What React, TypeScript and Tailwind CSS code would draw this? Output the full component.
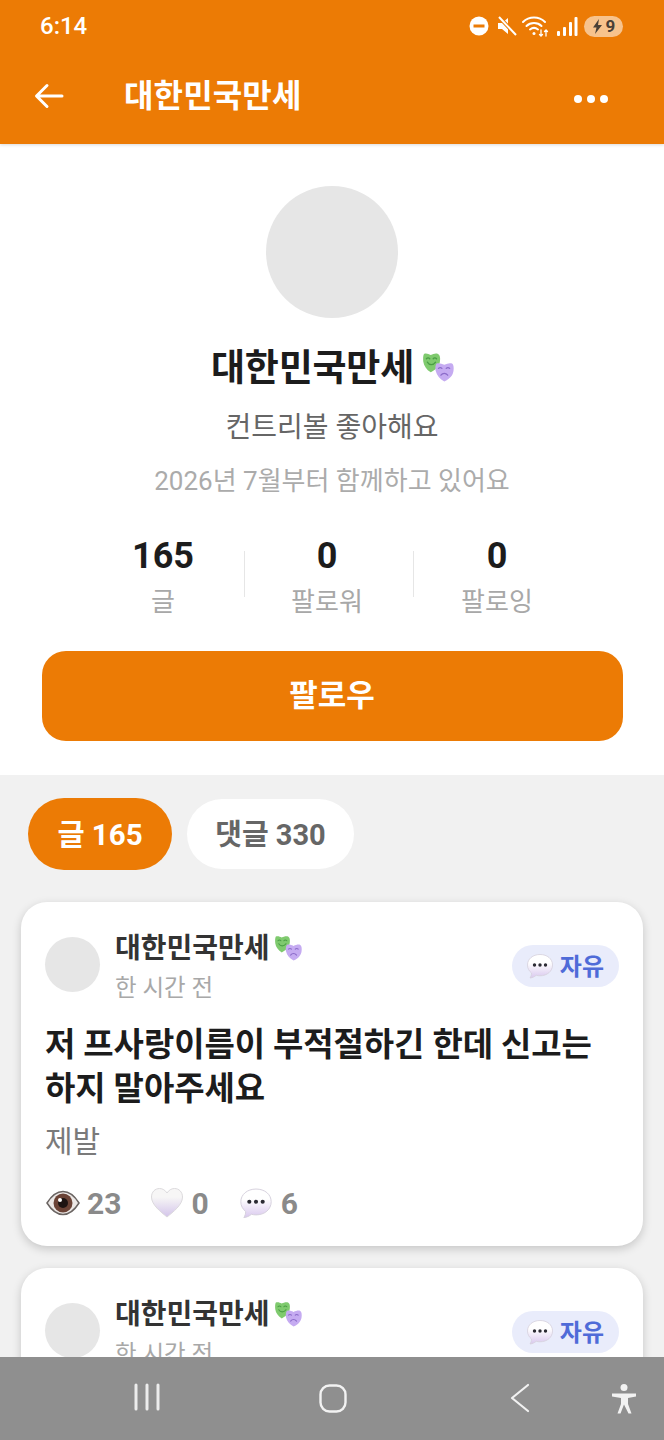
const font = { fontFamily: 'Roboto, "Noto Sans CJK KR", sans-serif' };

const Masks = ({ size = 32 }: { size?: number }) => (
  <svg width={size} height={size} viewBox="0 0 32 32">
    <path d="M1 3c2.500-1 4.500 0 7 1.200C10.500 3 13 2 15.500 3c2 1 2.500 4 2 7.500-.5 4-3 8-9.500 11.500C3.500 19 1 15.500.3 11 0 8 0 4.500 1 3z" fill="#7fca6e" />
    <path d="M3.500 8c1-1.300 2.500-1.300 3.500 0M10.500 8c1-1.300 2.500-1.300 3.500 0M4.500 11.500c2 3.500 6 3.500 8.500 0" fill="none" stroke="#4a9e45" strokeWidth="1.300" strokeLinecap="round" />
    <path d="M14 13c2.500-1 5 0 8 1.200 3-1.200 5.500-2.200 8-1.200 1.500 1 2 4 1.500 7.500-.6 4.500-3.500 8.500-9.500 11-4.500-2.500-7.800-6-9-11-.5-3-.2-6 1-7.500z" fill="#c5abf1" />
    <path d="M16 18c1-1.200 2.500-1.200 3.500 0M24 18c1-1.200 2.500-1.200 3.500 0M18.500 25c1.800-2.600 5-2.600 7 0" fill="none" stroke="#8c6cc9" strokeWidth="1.300" strokeLinecap="round" />
  </svg>
);

const Bubble = ({ size = 28, id }: { size?: number; id: string }) => (
  <svg width={size} height={size} viewBox="0 0 28 28">
    <defs>
      <linearGradient id={id} x1="0" y1="0" x2="0" y2="1">
        <stop offset="0.350" stopColor="#ffffff" />
        <stop offset="1" stopColor="#d9c8ee" />
      </linearGradient>
    </defs>
    <path d="M14 2.500C6.800 2.500 1.500 7 1.500 13c0 3.300 1.500 6 4 8 0 1.800-.5 3.500-1.500 5 2.400-.2 4.500-1.200 6.200-2.700 1.200.3 2.500.5 3.800.5 7.200 0 12.500-4.600 12.500-10.800S21.200 2.500 14 2.500z" fill={`url(#${id})`} stroke="#d5d0dc" strokeWidth="0.800" />
    <circle cx="8.500" cy="13" r="1.700" fill="#2b2b33" />
    <circle cx="14" cy="13" r="1.700" fill="#2b2b33" />
    <circle cx="19.500" cy="13" r="1.700" fill="#2b2b33" />
  </svg>
);

const Eye = () => (
  <svg width="34" height="28" viewBox="0 0 34 28">
    <path d="M1 14C6 6 11 2.500 17 2.500S28 6 33 14c-5 8-10 11.500-16 11.500S6 22 1 14z" fill="#ece8e6" stroke="#6a6462" strokeWidth="1.500" />
    <circle cx="17" cy="14" r="9.500" fill="#6b4336" />
    <circle cx="17" cy="14" r="5" fill="#1d1412" />
    <circle cx="14" cy="11" r="2" fill="#ffffff" />
  </svg>
);

const Heart = () => (
  <svg width="34" height="34" viewBox="0 0 34 32">
    <defs>
      <linearGradient id="heartFill" x1="0" y1="0" x2="0" y2="1">
        <stop offset="0.300" stopColor="#f7f6f6" />
        <stop offset="1" stopColor="#d3c4ea" />
      </linearGradient>
    </defs>
    <path d="M17 30C11 25 1.500 18 1.500 10 1.500 5 5 1.500 9.500 1.500c3.200 0 5.800 1.800 7.500 4.500 1.700-2.700 4.300-4.500 7.500-4.500 4.500 0 8 3.500 8 8.500 0 8-9.500 15-15.500 20z" fill="url(#heartFill)" stroke="#dcdadd" strokeWidth="1" />
  </svg>
);

const PostCard = ({ id, title, body, stats }: { id: string; title?: string[]; body?: string; stats?: boolean }) => (
  <div className="bg-white rounded-[26px] shadow-[0_3px_10px_rgba(0,0,0,0.18)] px-6 pt-[24px] pb-[25px]">
    <div className="flex items-start justify-between">
      <div className="flex items-start">
        <div className="w-[55px] h-[55px] rounded-full bg-[#e6e6e6] mt-[11px] shrink-0" />
        <div className="ml-[15px]">
          <div className="flex items-center h-[42px]">
            <span className="pt-[3px] text-[28px] font-bold text-[#333333]">대한민국만세</span>
            <span className="ml-[5px]"><Masks size={27} /></span>
          </div>
          <div className="mt-[4px] text-[23.500px] leading-[32px] text-[#a8a8a8]">한 시간 전</div>
        </div>
      </div>
      <div className="mt-[19px] h-[42px] pl-[14px] pr-[15px] rounded-full bg-[#e9ecfb] flex items-center gap-[6px]">
        <Bubble size={28} id={`tag-${id}`} />
        <span className="pt-[1px] text-[24px] font-bold text-[#4f6bd8]">자유</span>
      </div>
    </div>
    {title && (
      <div className="mt-[19px] text-[33px] leading-[44px] font-bold text-[#1c1c1c] tracking-[-0.1px]">
        {title.map((line) => <div key={line}>{line}</div>)}
      </div>
    )}
    {body && <div className="mt-[10px] text-[30px] leading-[42px] text-[#7a7a7a]">{body}</div>}
    {stats && (
      <div className="mt-[22px] flex items-center h-[36px] pl-[1px] text-[30px] font-bold text-[#8a8a8a]">
        <Eye />
        <span className="ml-[7px]">23</span>
        <span className="ml-[29px]"><Heart /></span>
        <span className="ml-[7px]">0</span>
        <span className="ml-[30px]"><Bubble size={34} id={`stat-${id}`} /></span>
        <span className="ml-[8px]">6</span>
      </div>
    )}
  </div>
);

const Stat = ({ value, label, className }: { value: string; label: string; className: string }) => (
  <div className={`flex flex-col items-center ${className}`}>
    <div className="text-[36px] leading-[42px] font-bold text-[#1c1c1c]">{value}</div>
    <div className="mt-[7px] text-[26px] leading-[36px] text-[#a8a8a8]">{label}</div>
  </div>
);

export default function App() {
  return (
    <div className="h-[1440px] w-[664px] flex flex-col overflow-hidden bg-[#f1f1f1]" style={font}>
      <div className="flex-1 min-h-0 overflow-hidden">
        <div className="bg-[#ec7b05] h-[144px] text-white shadow-[0_1px_3px_rgba(0,0,0,0.15)] relative">
          <div className="h-[52px] px-[40px] flex items-center justify-between">
            <span className="text-[24px] font-medium">6:14</span>
            <div className="flex items-center mr-[1px]">
              <svg width="20" height="20" viewBox="0 0 20 20"><circle cx="10" cy="10" r="9.500" fill="#fff" /><rect x="4.500" y="8.500" width="11" height="3" fill="#ec7b05" /></svg>
              <svg className="ml-[7px]" width="22" height="22" viewBox="0 0 22 22"><path d="M2 8h4l6-5v16l-6-5H2z" fill="#fff" /><path d="M3 2l17 18" stroke="#ec7b05" strokeWidth="4" /><path d="M3 2l17 18" stroke="#fff" strokeWidth="2" /></svg>
              <svg className="ml-[3px]" width="30" height="24" viewBox="0 0 30 24" fill="none" stroke="#fff" strokeWidth="2" strokeLinecap="round"><path d="M2 8c6-6 16-6 22 0M5.500 12c4-4 11-4 15 0M9 15.500c2.500-2 5.500-2 8 0" /><circle cx="13" cy="19.500" r="1.500" fill="#fff" stroke="none" /><path d="M20 16v6M18.500 20.500l1.500 1.500 1.500-1.500M25 22v-6M23.500 17.500l1.500-1.500 1.500 1.500" strokeWidth="1.300" /></svg>
              <svg className="ml-[5px]" width="22" height="22" viewBox="0 0 22 22" fill="#fff"><rect x="1" y="16" width="3" height="5" rx="1" /><rect x="7" y="12" width="3" height="9" rx="1" /><rect x="13" y="7" width="3" height="14" rx="1" /><rect x="18.500" y="2" width="3" height="19" rx="1" /></svg>
              <div className="ml-[6px] w-[39px] h-[21px] rounded-full bg-[#f7c38d] flex items-center justify-center text-[#4a4036]">
                <svg width="11" height="15" viewBox="0 0 11 15" fill="#4a4036"><path d="M7 0L1 8.500h3.500L3 15l7-9H6z" /></svg>
                <span className="ml-[3px] text-[17px] font-bold leading-none">9</span>
              </div>
            </div>
          </div>
          <div className="h-[92px] flex items-center pb-[4px] pl-[34px] pr-[56px]">
            <svg width="30" height="28" viewBox="0 0 30 28" fill="none" stroke="#fff" strokeWidth="3" strokeLinecap="round" strokeLinejoin="round"><path d="M28 14H3M13 3.500L2.500 14 13 24.500" /></svg>
            <span className="ml-[60px] text-[32px] font-bold tracking-[0.15px] flex-1">대한민국만세</span>
            <div className="flex gap-[5px] mt-[6px]">
              <span className="w-[8px] h-[8px] rounded-full bg-white" />
              <span className="w-[8px] h-[8px] rounded-full bg-white" />
              <span className="w-[8px] h-[8px] rounded-full bg-white" />
            </div>
          </div>
        </div>

        <div className="bg-white h-[631px] flex flex-col items-center pt-[42px]">
          <div className="w-[132px] h-[132px] rounded-full bg-[#e6e6e6]" />
          <div className="mt-[23px] h-[56px] flex items-center pl-[1px]">
            <span className="text-[37px] font-bold text-[#1c1c1c] tracking-[-0.2px]">대한민국만세</span>
            <span className="ml-[9px] mt-[-6px]"><Masks size={31} /></span>
          </div>
          <div className="mt-[11px] text-[28px] leading-[40px] text-[#666666]">컨트리볼 좋아해요</div>
          <div className="mt-[13px] text-[26px] leading-[40px] text-[#ababab]">2026년 7월부터 함께하고 있어요</div>
          <div className="mt-[34px] mr-[2px] flex items-start">
            <Stat value="165" label="글" className="w-[162px]" />
            <div className="mt-[16px] w-px h-[46px] bg-[#e6e6e6]" />
            <Stat value="0" label="팔로워" className="w-[168px] pr-[4px]" />
            <div className="mt-[16px] w-px h-[46px] bg-[#e6e6e6]" />
            <Stat value="0" label="팔로잉" className="w-[166px]" />
          </div>
          <div className="mt-[31px] w-[581px] h-[90px] pt-[1px] rounded-[24px] bg-[#ec7b05] flex items-center justify-center text-white text-[31px] font-bold">팔로우</div>
        </div>

        <div className="px-[21px] pt-[23px]">
          <div className="flex items-center gap-[15px] pl-[7px]">
            <div className="h-[72px] w-[144px] pt-[3px] rounded-full bg-[#ec7b05] text-white text-[29.500px] font-bold flex items-center justify-center">글 165</div>
            <div className="h-[70px] w-[167px] pt-[3px] rounded-full bg-white text-[#666666] text-[29px] font-bold flex items-center justify-center">댓글 330</div>
          </div>
          <div className="mt-[32px] flex flex-col gap-[22px]">
            <PostCard id="a" title={['저 프사랑이름이 부적절하긴 한데 신고는', '하지 말아주세요']} body="제발" stats />
            <PostCard id="b" />
          </div>
        </div>
      </div>

      <div className="h-[83px] shrink-0 bg-[#8f8f8f] flex items-center relative">
        <svg className="absolute left-[132px] top-[26px]" width="30" height="30" viewBox="0 0 30 30" stroke="#ececec" strokeWidth="3" strokeLinecap="round"><path d="M4 2v24M15 2v24M26 2v24" /></svg>
        <svg className="absolute left-[318px] top-[26px]" width="30" height="30" viewBox="0 0 30 30" fill="none" stroke="#f2f2f2" strokeWidth="2.400"><rect x="2.500" y="2.500" width="25" height="26" rx="9" /></svg>
        <svg className="absolute left-[507px] top-[26px]" width="30" height="30" viewBox="0 0 30 30" fill="none" stroke="#f2f2f2" strokeWidth="2.200" strokeLinecap="round" strokeLinejoin="round"><path d="M21 2L5 15l16 13" /></svg>
        <svg className="absolute left-[609px] top-[26px]" width="30" height="32" viewBox="0 0 30 32" fill="#f2f2f2"><circle cx="15" cy="4.500" r="3.500" /><path d="M3 10.500h24v3l-8 1.500 0 6 3.500 9.500h-3L15 21.500 11.500 30.500h-3L12 21v-6l-9-1.500z" /></svg>
      </div>
    </div>
  );
}
